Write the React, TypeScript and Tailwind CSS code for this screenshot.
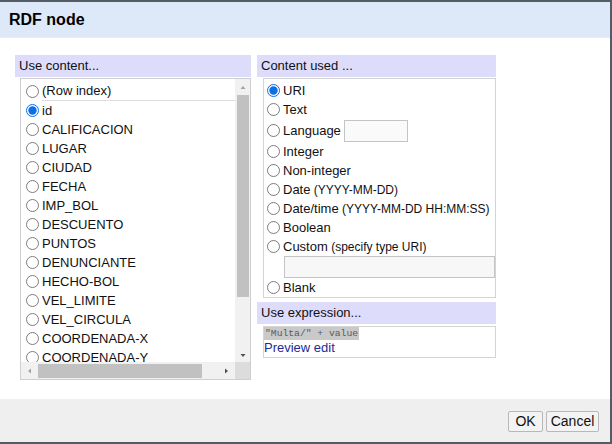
import React from 'react';

const columns = [
  '(Row index)',
  'id',
  'CALIFICACION',
  'LUGAR',
  'CIUDAD',
  'FECHA',
  'IMP_BOL',
  'DESCUENTO',
  'PUNTOS',
  'DENUNCIANTE',
  'HECHO-BOL',
  'VEL_LIMITE',
  'VEL_CIRCULA',
  'COORDENADA-X',
  'COORDENADA-Y',
];

function Radio({ checked = false }: { checked?: boolean }) {
  return (
    <svg width="13" height="13" viewBox="0 0 13 13" className="shrink-0">
      {checked ? (
        <>
          <circle cx="6.5" cy="6.5" r="6" fill="#fff" stroke="#0b6fe6" strokeWidth="1" />
          <circle cx="6.5" cy="6.5" r="4.2" fill="#0b6fe6" />
        </>
      ) : (
        <circle cx="6.5" cy="6.5" r="6" fill="#fff" stroke="#6e6e6e" strokeWidth="0.9" />
      )}
    </svg>
  );
}

function Arrow({ dir, dark }: { dir: 'up' | 'down' | 'left' | 'right'; dark?: boolean }) {
  const pts = {
    up: '3.5,8 8.5,8 6,5',
    down: '3.5,5 8.5,5 6,8',
    left: '8,3.5 8,8.5 5,6',
    right: '5,3.5 5,8.5 8,6',
  }[dir];
  return (
    <svg width="12" height="12" viewBox="0 0 12 12">
      <polygon points={pts} fill={dark ? '#505050' : '#a3a3a3'} />
    </svg>
  );
}

function TypeRow({ label, hint, checked }: { label: string; hint?: string; checked?: boolean }) {
  return (
    <div className="flex items-center h-[19px] gap-[3px]">
      <Radio checked={checked} />
      <span className="text-[13px] text-[#111]">
        {label}
        {hint && <span className="text-[12px]"> {hint}</span>}
      </span>
    </div>
  );
}

export default function App() {
  return (
    <div
      className="w-[612px] h-[444px] flex flex-col bg-white border-t-2 border-r-2 border-b-2 border-[#535b64]"
      style={{ fontFamily: '"Liberation Sans", Arial, sans-serif' }}
    >
      {/* Header */}
      <div className="h-[36px] shrink-0 bg-[#dde9f9] border-b border-[#e6eefa] flex items-center pl-[9px]">
        <h1 className="text-[16px] font-bold text-black">RDF node</h1>
      </div>

      {/* Body */}
      <div className="flex-1 flex gap-[6px] pt-[17px] pl-[15px]">
        {/* Left column */}
        <div className="w-[236px] flex flex-col">
          <div className="h-[22px] bg-[#dddcfb] text-[13px] leading-[22px] pl-[4px] text-[#111]">Use content...</div>
          <div className="mt-[1px] ml-[5px] w-[231px] h-[302px] border border-[#cfcfcf] flex flex-col">
            <div className="h-[283px] flex">
              <div className="w-[214px] overflow-hidden pt-[2px]">
                {columns.map((c, i) => (
                  <div key={c} className={`flex items-center pl-[5px] gap-[3px] ${i === 0 ? 'h-[20px]' : 'h-[19px]'}`}>
                    <Radio checked={c === 'id'} />
                    <span
                      className={`text-[13px] text-[#111] whitespace-nowrap ${
                        i === 0 ? 'flex-1 h-[20px] leading-[19px] border-b border-[#dedede]' : ''
                      }`}
                    >
                      {c}
                    </span>
                  </div>
                ))}
              </div>
              <div className="w-[15px] bg-[#f1f1f1] flex flex-col items-center">
                <div className="h-[15px] flex items-center justify-center">
                  <Arrow dir="up" />
                </div>
                <div className="mt-[1px] w-[12px] h-[202px] bg-[#c1c1c1]" />
                <div className="flex-1" />
                <div className="h-[15px] flex items-center justify-center">
                  <Arrow dir="down" dark />
                </div>
              </div>
            </div>
            <div className="flex-1 flex">
              <div className="w-[214px] bg-[#f1f1f1] flex items-center">
                <div className="w-[15px] flex justify-center">
                  <Arrow dir="left" />
                </div>
                <div className="ml-[2px] w-[164px] h-[14px] bg-[#c1c1c1]" />
                <div className="flex-1" />
                <div className="w-[15px] flex justify-center mr-[2px]">
                  <Arrow dir="right" dark />
                </div>
              </div>
              <div className="w-[15px] bg-[#dcdcdc]" />
            </div>
          </div>
        </div>

        {/* Right column */}
        <div className="w-[239px] flex flex-col">
          <div className="h-[22px] bg-[#dddcfb] text-[13px] leading-[22px] pl-[4px] text-[#111]">Content used ...</div>
          <div className="mt-[1px] ml-[6px] border border-[#d4d4d4] pt-[2px] pl-[3px]">
            <TypeRow label="URI" checked />
            <TypeRow label="Text" />
            <div className="flex items-center h-[23px] gap-[3px]">
              <Radio />
              <span className="text-[13px] text-[#111]">Language</span>
              <div className="w-[64px] h-[22px] border border-[#c4c4c4] bg-[#fafafa]" />
            </div>
            <TypeRow label="Integer" />
            <TypeRow label="Non-integer" />
            <TypeRow label="Date" hint="(YYYY-MM-DD)" />
            <TypeRow label="Date/time" hint="(YYYY-MM-DD HH:MM:SS)" />
            <TypeRow label="Boolean" />
            <TypeRow label="Custom" hint="(specify type URI)" />
            <div className="ml-[17px] h-[22px] border border-[#c4c4c4] bg-[#f7f7f7]" />
            <TypeRow label="Blank" />
          </div>
          <div className="mt-[4px] h-[22px] bg-[#dddcfb] text-[13px] leading-[22px] pl-[4px] text-[#111]">Use expression...</div>
          <div className="mt-[2px] ml-[6px] h-[32px] border border-[#d4d4d4] flex flex-col items-start">
            <span
              className="text-[9.7px] leading-[13px] bg-[#c9c9c9] text-[#5a5a5a] px-[1px]"
              style={{ fontFamily: '"Liberation Mono", monospace' }}
            >
              "Multa/" + value
            </span>
            <span className="text-[13px] leading-[16px] text-[#1d2a9a]">Preview edit</span>
          </div>
        </div>
      </div>

      {/* Footer */}
      <div className="h-[43px] shrink-0 bg-[#efefef] flex items-start justify-end gap-[3px] pt-[12px] pr-[11px]">
        <button className="w-[35px] h-[21px] border border-[#b8b8b8] rounded-[2px] bg-[#f3f3f3] text-[14px] text-[#111] leading-[19px]">
          OK
        </button>
        <button className="w-[53px] h-[21px] border border-[#b8b8b8] rounded-[2px] bg-[#f3f3f3] text-[14px] text-[#111] leading-[19px]">
          Cancel
        </button>
      </div>
    </div>
  );
}
